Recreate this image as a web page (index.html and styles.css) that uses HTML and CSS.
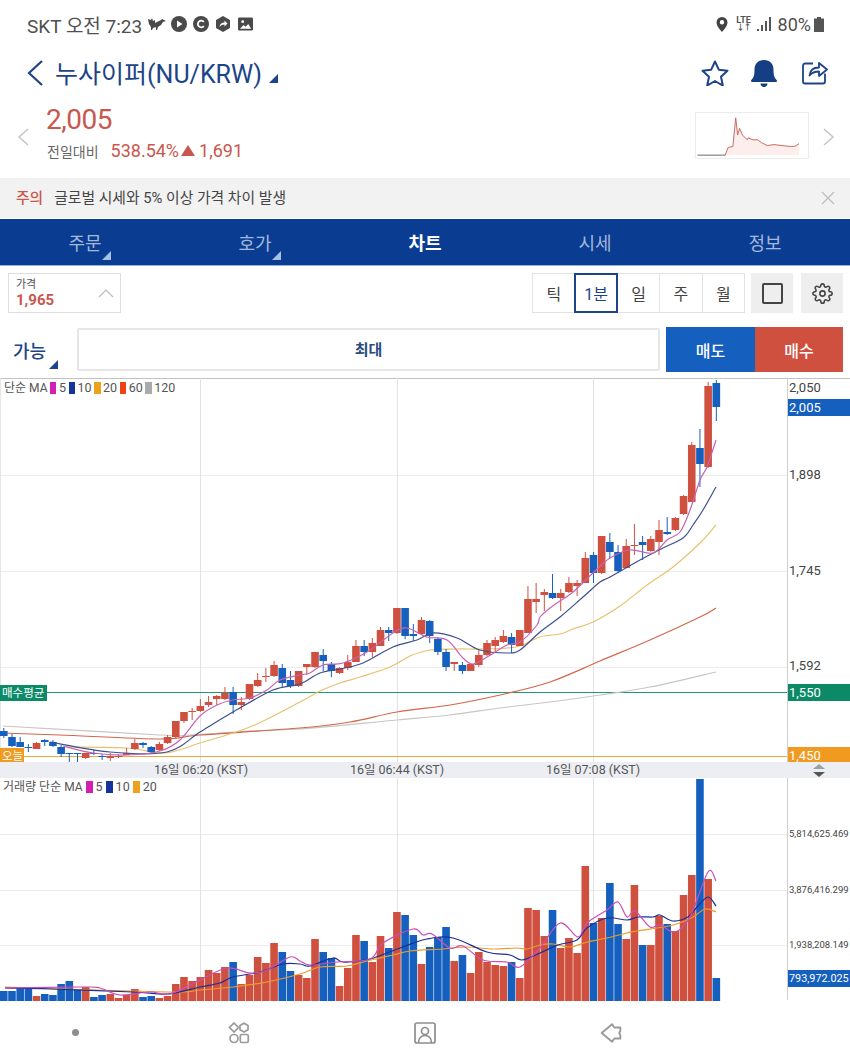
FILE: index.html
```html
<!DOCTYPE html>
<html lang="ko">
<head>
    <meta charset="UTF-8">
    <meta name="viewport" content="width=device-width, initial-scale=1.0">
    <title>누사이퍼(NU/KRW)</title>
    <link rel="stylesheet" href="styles.css">
</head>
<body>
    <!-- status bar -->
    <div class="status">
        <div class="status-left">
            <span class="status-text clock">SKT 오전 7:23</span>
            <svg class="st-bird" viewBox="0 0 18 12"><path d="M0 1l3 1 1-2 1 3 2-1v3l4-2 2-1 1-1 2 1 2 1-3 1-2 3-3 2-1 3-1 0 0-3-3 1-1 2-1 0 0-3-2-3z" fill="#4a4a4a"/></svg>
            <svg class="st-ico" viewBox="0 0 16 16"><circle cx="8" cy="8" r="8" fill="#4a4a4a"/><path d="M6 4.500l5.500 3.500-5.500 3.500z" fill="#fff"/></svg>
            <svg class="st-ico" viewBox="0 0 16 16"><circle cx="8" cy="8" r="8" fill="#4a4a4a"/><path d="M10.800 6a3.300 3.300 0 1 0 0 4" fill="none" stroke="#fff" stroke-width="1.800"/></svg>
            <svg class="st-ico" viewBox="0 0 16 16"><path d="M8 0l7 4v8l-7 4-7-4V4z" fill="#4a4a4a"/><path d="M4.500 11c.3-3 2-4.500 5-4.500V4.500l3 3-3 3V8.500c-2 0-3.500.7-5 2.500z" fill="#fff"/></svg>
            <svg class="st-pic" viewBox="0 0 16 14"><rect width="16" height="14" rx="1.500" fill="#4a4a4a"/><circle cx="5" cy="4.500" r="1.500" fill="#fff"/><path d="M2 12l4-4 2 2 3-3 3 5z" fill="#fff"/></svg>
        </div>
        <div class="status-right">
            <svg class="st-pin" viewBox="0 0 12 15"><path d="M6 0a5.500 5.500 0 0 0-5.500 5.500C.5 9.500 6 15 6 15s5.500-5.500 5.500-9.500A5.500 5.500 0 0 0 6 0zm0 7.500a2.200 2.200 0 1 1 0-4.400 2.200 2.200 0 0 1 0 4.400z" fill="#444"/></svg>
            <span class="st-lte">LTE<i>↓↑</i></span>
            <svg class="st-signal" viewBox="0 0 15 15"><path d="M0 12h2v2H0zM4 8h2v6H4zM8 4h2v10H8zM12 0h2v14h-2z" fill="#555"/></svg>
            <span class="status-text">80%</span>
            <svg class="st-batt" viewBox="0 0 10 15"><path d="M3 0h4v1.500h3V15H0V1.500h3z" fill="#555"/></svg>
        </div>
    </div>

    <!-- title -->
    <div class="title-row">
        <svg class="back" viewBox="0 0 16 26"><path d="M15 1L2 13l13 12" fill="none" stroke="#1d4488" stroke-width="2.200"/></svg>
        <h1 class="title">누사이퍼(NU/KRW)</h1>
        <span class="corner corner-title"></span>
        <div class="title-icons">
            <svg viewBox="0 0 28 26" class="ic-star"><path d="M14 1.500l3.800 8.200 8.700 1-6.500 6 1.800 8.800-7.800-4.500-7.800 4.500L8 16.700l-6.500-6 8.700-1z" fill="none" stroke="#1d4488" stroke-width="2" stroke-linejoin="round"/></svg>
            <svg viewBox="0 0 26 27" class="ic-bell"><path d="M13 0c6 0 9.500 4 9.500 9.500 0 5 .5 8 3.500 11 0 1-.5 1.500-1.500 1.500h-23C.5 22 0 21.500 0 20.500c3-3 3.500-6 3.500-11C3.500 4 7 0 13 0zM9.500 23.500h7c0 2-1.500 3.500-3.500 3.500s-3.500-1.500-3.500-3.500z" fill="#163e84"/></svg>
            <svg viewBox="0 0 26 25" class="ic-share"><path d="M11 3.500H3A2 2 0 0 0 1 5.500v16a2 2 0 0 0 2 2h18a2 2 0 0 0 2-2v-8" fill="none" stroke="#1d4488" stroke-width="1.800"/><path d="M7.500 15.500c.5-5 4-8 9.500-8V3l8 6.500-8 6.500v-4.500c-4 0-7 1-9.500 4z" fill="none" stroke="#1d4488" stroke-width="1.800" stroke-linejoin="round"/></svg>
        </div>
    </div>

    <!-- quote -->
    <div class="quote">
        <svg class="side-arrow" viewBox="0 0 12 18"><path d="M11 1L2 9l9 8" fill="none" stroke="#c4c4c4" stroke-width="1.500"/></svg>
        <div class="quote-main">
            <div class="price">2,005</div>
            <div class="diff">
                <span class="diff-label">전일대비</span>
                <span class="diff-val">538.54%</span>
                <span class="tri-up"></span>
                <span class="diff-val">1,691</span>
            </div>
        </div>
        <svg class="spark" viewBox="695 112 114 47">
            <path d="M724 156l3-8 5-1 3-30 2 18 2-7 3 7 5 5 1-2 5 2h5l4 3 6 3 7-1 17 2 5-.3 4-2.700V156z" fill="#fbeeec"/>
            <path d="M724 156l3-8 5-1 3-30 2 18 2-7 3 7 5 5 1-2 5 2h5l4 3 6 3 7-1 17 2 5-.3 4-2.700" fill="none" stroke="#c9655c" stroke-width="1"/>
            <path d="M695 156h29" fill="none" stroke="#666" stroke-width="1"/>
        </svg>
        <svg class="side-arrow" viewBox="0 0 12 18"><path d="M1 1l9 8-9 8" fill="none" stroke="#c4c4c4" stroke-width="1.500"/></svg>
    </div>

    <!-- notice -->
    <div class="notice">
        <span class="notice-tag">주의</span>
        <span class="notice-text">글로벌 시세와 5% 이상 가격 차이 발생</span>
        <svg class="notice-close" viewBox="0 0 14 14"><path d="M1 1l12 12M13 1L1 13" stroke="#bcbcbc" stroke-width="1.200"/></svg>
    </div>

    <!-- tabs -->
    <nav class="tabs">
        <div class="tab">주문<span class="corner corner-tab"></span></div>
        <div class="tab">호가<span class="corner corner-tab"></span></div>
        <div class="tab active">차트</div>
        <div class="tab">시세</div>
        <div class="tab">정보</div>
    </nav>

    <!-- chart toolbar -->
    <div class="toolbar">
        <div class="price-box">
            <div>
                <div class="price-box-label">가격</div>
                <div class="price-box-val">1,965</div>
            </div>
            <svg viewBox="0 0 16 9" class="price-box-arrow"><path d="M1 8l7-7 7 7" fill="none" stroke="#bbb" stroke-width="1.200"/></svg>
        </div>
        <div class="periods">
            <button class="period">틱</button>
            <button class="period selected">1분</button>
            <button class="period">일</button>
            <button class="period">주</button>
            <button class="period">월</button>
        </div>
        <div class="tool-btn"><span class="square"></span></div>
        <div class="tool-btn">
            <svg class="gear" viewBox="0 0 24 24" fill="none" stroke="#444" stroke-width="1.800"><circle cx="12" cy="12" r="3"/><path d="M19.4 15a1.65 1.65 0 0 0 .33 1.82l.06.06a2 2 0 0 1 0 2.83 2 2 0 0 1-2.83 0l-.06-.06a1.65 1.65 0 0 0-1.82-.33 1.65 1.65 0 0 0-1 1.51V21a2 2 0 0 1-2 2 2 2 0 0 1-2-2v-.09A1.65 1.65 0 0 0 9 19.4a1.65 1.65 0 0 0-1.82.33l-.06.06a2 2 0 0 1-2.83 0 2 2 0 0 1 0-2.83l.06-.06a1.65 1.65 0 0 0 .33-1.82 1.65 1.65 0 0 0-1.51-1H3a2 2 0 0 1-2-2 2 2 0 0 1 2-2h.09A1.65 1.65 0 0 0 4.6 9a1.65 1.65 0 0 0-.33-1.82l-.06-.06a2 2 0 0 1 0-2.83 2 2 0 0 1 2.83 0l.06.06a1.65 1.65 0 0 0 1.82.33H9a1.65 1.65 0 0 0 1-1.51V3a2 2 0 0 1 2-2 2 2 0 0 1 2 2v.09a1.65 1.65 0 0 0 1 1.51 1.65 1.65 0 0 0 1.82-.33l.06-.06a2 2 0 0 1 2.83 0 2 2 0 0 1 0 2.83l-.06.06a1.65 1.65 0 0 0-.33 1.82V9a1.65 1.65 0 0 0 1.51 1H21a2 2 0 0 1 2 2 2 2 0 0 1-2 2h-.09a1.65 1.65 0 0 0-1.51 1z"/></svg>
        </div>
    </div>

    <!-- order row -->
    <div class="order-row">
        <div class="able">가능<span class="corner corner-able"></span></div>
        <div class="max-box">최대</div>
        <button class="trade sell">매도</button>
        <button class="trade buy">매수</button>
    </div>

    <!-- chart: svg coordinates are page pixels -->
    <div class="chart">
        <svg id="plot" class="plot" viewBox="0 378 850 623"></svg>

        <div class="legend legend-price">
            <span class="legend-name">단순 MA</span>
            <i class="sw c5"></i><span>5</span>
            <i class="sw c10"></i><span>10</span>
            <i class="sw c20"></i><span>20</span>
            <i class="sw c60"></i><span>60</span>
            <i class="sw c120"></i><span>120</span>
        </div>
        <div class="legend legend-vol">
            <span class="legend-name">거래량 단순 MA</span>
            <i class="sw c5"></i><span>5</span>
            <i class="sw c10"></i><span>10</span>
            <i class="sw c20"></i><span>20</span>
        </div>

        <span class="tick t2050">2,050</span>
        <span class="tag tag-blue t2005">2,005</span>
        <span class="tick t1898">1,898</span>
        <span class="tick t1745">1,745</span>
        <span class="tick t1592">1,592</span>
        <span class="tag tag-green t1550">1,550</span>
        <span class="tag tag-orange t1450">1,450</span>
        <span class="flag flag-green">매수평균</span>
        <span class="flag flag-orange">오늘</span>

        <div class="time-strip">
            <span class="time t1">16일 06:20 (KST)</span>
            <span class="time t2">16일 06:44 (KST)</span>
            <span class="time t3">16일 07:08 (KST)</span>
            <svg class="sorter" viewBox="0 0 14 13"><path d="M7 0l6 5H1z" fill="#9aa0a8"/><path d="M7 13L1 8h12z" fill="#555"/></svg>
        </div>

        <span class="tick small v1">5,814,625.469</span>
        <span class="tick small v2">3,876,416.299</span>
        <span class="tick small v3">1,938,208.149</span>
        <span class="tag tag-blue v4">793,972.025</span>
    </div>

    <!-- android nav -->
    <div class="softkeys">
        <span class="dot"></span>
        <svg viewBox="0 0 22 22" class="key"><g fill="none" stroke="#9a9a9a" stroke-width="1.700"><path d="M6 1l4.500 4.500L6 10 1.500 5.500z"/><path d="M16 1.200l4 2.300v4.200l-4 2.300-4-2.300V3.500z"/><circle cx="6" cy="16.500" r="4"/><rect x="12.300" y="12.500" width="8" height="8" rx="1.500"/></g></svg>
        <svg viewBox="0 0 22 22" class="key"><g fill="none" stroke="#8e8e8e" stroke-width="1.700"><rect x="1" y="1" width="20" height="20" rx="2"/><circle cx="11" cy="9" r="3.500"/><path d="M4.500 21c0-5 3-7.500 6.500-7.500s6.500 2.500 6.500 7.500"/></g></svg>
        <svg viewBox="0 0 20 20" class="key"><path d="M1.500 10L11 2l2 3h5.500v3l-1 2 1 2v3H13l-2 3z" fill="none" stroke="#9a9a9a" stroke-width="1.700" stroke-linejoin="round"/></svg>
    </div>

    <script src="chart.js"></script>
</body>
</html>
```

FILE: styles.css
```css
* {
    box-sizing: border-box;
}

html, body {
    margin: 0;
    width: 850px;
    height: 1062px;
    overflow: hidden;
    background: #fff;
}

body {
    font-family: Roboto, "Noto Sans CJK KR", sans-serif;
    color: #333;
}

button {
    font-family: inherit;
    border: none;
    padding: 0;
}

/* status bar */
.status {
    display: flex;
    justify-content: space-between;
    align-items: center;
    height: 50px;
    padding: 0 26px 2px 27px;
}

.status-left, .status-right {
    display: flex;
    align-items: center;
}

.status-text {
    font-size: 18px;
    color: #505050;
    white-space: nowrap;
}

.status-text.clock {
    font-size: 19px;
}

.st-bird { width: 18px; height: 12px; margin: 0 5px 0 6px; }
.st-ico { width: 16px; height: 16px; margin-right: 6px; }
.st-pic { width: 15px; height: 14px; margin-left: 1px; }
.st-pin { width: 12px; height: 15px; margin-right: 9px; }
.st-signal { width: 15px; height: 15px; margin: 0 6px 0 6px; }
.st-batt { width: 10px; height: 15px; margin-left: 3px; }

.st-lte {
    display: flex;
    flex-direction: column;
    align-items: center;
    font-size: 9px;
    font-weight: 700;
    line-height: 8px;
    color: #555;
    width: 14px;
}

.st-lte i {
    font-style: normal;
    font-size: 8px;
    letter-spacing: -1px;
}

/* title */
.title-row {
    display: flex;
    align-items: center;
    height: 46px;
    padding-left: 27px;
}

.back {
    width: 16px;
    height: 26px;
    margin-right: 12px;
}

.title {
    margin: 0 0 2px;
    font-size: 25px;
    font-weight: 400;
    color: #1d4488;
}

.corner {
    display: block;
    width: 0;
    height: 0;
    border-style: solid;
    border-width: 0 0 9px 9px;
    border-color: transparent;
}

.corner-title {
    border-bottom-color: #1d4488;
    margin: 11px 0 0 7px;
}

.title-icons {
    display: flex;
    align-items: center;
    margin-left: auto;
    padding-right: 22px;
}

.ic-star { width: 28px; height: 26px; margin-right: 22px; }
.ic-bell { width: 26px; height: 27px; margin-right: 25px; }
.ic-share { width: 26px; height: 25px; margin-bottom: 2px; }

/* quote */
.quote {
    display: flex;
    align-items: center;
    height: 82px;
    padding: 0 15px 0 17px;
}

.side-arrow {
    width: 12px;
    height: 18px;
}

.quote-main {
    align-self: flex-start;
    margin: 7px 0 0 17px;
}

.price {
    font-size: 28px;
    line-height: 34px;
    color: #c9574d;
    letter-spacing: -0.5px;
}

.diff {
    display: flex;
    align-items: center;
    margin-top: 3px;
}

.diff-label {
    font-size: 14px;
    color: #666;
    margin: 0 12px 0 1px;
}

.diff-val {
    font-size: 18px;
    color: #c9574d;
}

.tri-up {
    width: 0;
    height: 0;
    margin: 0 4px 0 2px;
    border-style: solid;
    border-width: 0 7.500px 11px 7.500px;
    border-color: transparent transparent #c9574d transparent;
}

.spark {
    width: 114px;
    height: 47px;
    margin: -3px 14px 0 auto;
    border: 1px solid #ececec;
}

/* notice */
.notice {
    display: flex;
    align-items: center;
    height: 40px;
    padding: 0 15px 3px 16px;
    background: #f2f2f2;
}

.notice-tag {
    font-size: 14.800px;
    font-weight: 500;
    color: #c9574d;
    margin-right: 11px;
}

.notice-text {
    font-size: 14.800px;
    color: #444;
}

.notice-close {
    width: 14px;
    height: 14px;
    margin: 3px 0 0 auto;
}

/* tabs */
.tabs {
    display: grid;
    grid-template-columns: repeat(5, 1fr);
    height: 47px;
    margin-top: 1px;
    background: #0a3c91;
    border-bottom: 1px solid #8fb0de;
}

.tab {
    display: flex;
    align-items: center;
    justify-content: center;
    font-size: 18px;
    color: #a3b9dc;
    position: relative;
}

.tab.active {
    color: #fff;
    font-weight: 700;
}

.corner-tab {
    position: absolute;
    left: 102px;
    bottom: 5px;
    border-bottom-color: #a9c0e3;
}

/* toolbar */
.toolbar {
    display: flex;
    align-items: flex-start;
    height: 61px;
    padding: 7px 7px 0 8px;
}

.price-box {
    display: flex;
    align-items: center;
    justify-content: space-between;
    width: 113px;
    height: 40px;
    padding: 0 6px 0 7px;
    border: 1px solid #dedede;
}

.price-box-label {
    font-size: 11px;
    line-height: 14px;
    color: #555;
}

.price-box-val {
    font-size: 15px;
    line-height: 16px;
    font-weight: 700;
    color: #c9574d;
}

.price-box-arrow {
    width: 16px;
    height: 9px;
}

.periods {
    display: flex;
    margin-left: auto;
    margin-right: 6px;
}

.period {
    width: 43.400px;
    height: 40px;
    margin-left: -1px;
    background: #fff;
    border: 1px solid #e2e2e2;
    font-size: 16px;
    color: #444;
}

.period.selected {
    position: relative;
    border: 2px solid #1d4488;
    color: #1d4488;
}

.tool-btn {
    display: flex;
    align-items: center;
    justify-content: center;
    width: 42px;
    height: 40px;
    background: #eee;
}

.tool-btn + .tool-btn {
    margin-left: 8px;
}

.square {
    width: 21px;
    height: 21px;
    border: 2px solid #444;
    border-radius: 2px;
}

.gear {
    width: 21px;
    height: 21px;
}

/* order row */
.order-row {
    display: flex;
    align-items: stretch;
    height: 45px;
    padding-right: 7px;
}

.able {
    position: relative;
    width: 77px;
    padding: 10px 0 0 13px;
    font-size: 18px;
    font-weight: 500;
    color: #1d4488;
}

.corner-able {
    position: absolute;
    left: 49px;
    bottom: 3px;
    border-bottom-color: #1d4488;
}

.max-box {
    display: flex;
    align-items: center;
    justify-content: center;
    width: 583px;
    margin: 1px 6px 1px 0;
    padding-bottom: 2px;
    border: 2px solid #e6e6e6;
    border-radius: 2px;
    font-size: 15px;
    font-weight: 700;
    color: #2a4a80;
}

.trade {
    width: 89px;
    font-size: 16px;
    font-weight: 500;
    color: #fff;
}

.sell { background: #1560bf; }
.buy { background: #d0503f; width: 88px; }

/* chart */
.chart {
    position: relative;
    height: 623px;
    margin-top: 6px;
}

.plot {
    position: absolute;
    left: 0;
    top: 0;
    width: 850px;
    height: 623px;
}

.legend {
    position: absolute;
    display: flex;
    align-items: center;
    font-size: 12.500px;
    line-height: 16px;
    color: #555;
    white-space: nowrap;
}

.legend-price { left: 4px; top: 2px; }
.legend-vol { left: 3px; top: 401px; }

.legend-name {
    font-size: 12px;
}

.sw {
    display: inline-block;
    width: 6.500px;
    height: 12px;
    margin: 0 2.500px;
}

.legend-vol .sw {
    margin: 0 3px 0 3.500px;
}

.c5 { background: #d21fb4; }
.c10 { background: #14349c; }
.c20 { background: #eea11d; }
.c60 { background: #ee4415; }
.c120 { background: #aaa; }

.tick, .tag {
    position: absolute;
    left: 788px;
    font-size: 13px;
    line-height: 17px;
    color: #444;
    padding-left: 1px;
    white-space: nowrap;
}

.tick.small {
    font-size: 9.500px;
}

.tag {
    width: 62px;
    color: #fff;
}

.tag-blue { background: #1560bf; }
.tag-green { background: #0c8a68; }
.tag-orange { background: #f09a1f; }

.t2050 { top: 1px; }
.t2005 { top: 21px; }
.t1898 { top: 88px; }
.t1745 { top: 184px; }
.t1592 { top: 279px; }
.t1550 { top: 306px; }
.t1450 { top: 369px; }
.v1 { top: 447px; }
.v2 { top: 503px; }
.v3 { top: 558px; }
.v4 { top: 592px; font-size: 10.800px; }

.flag {
    position: absolute;
    left: 0;
    font-size: 11.500px;
    line-height: 16px;
    padding: 0 2px;
    color: #fff;
    white-space: nowrap;
}

.flag-green { top: 307px; width: 47px; background: #0c8a68; }
.flag-orange { top: 370px; width: 24px; background: #f09a1f; }

.time-strip {
    position: absolute;
    left: 0;
    top: 384px;
    width: 850px;
    height: 16px;
    background: #eceef3;
}

.time {
    position: absolute;
    top: 0;
    transform: translateX(-50%);
    font-size: 12.500px;
    line-height: 16px;
    color: #555;
    white-space: nowrap;
}

.t1 { left: 201px; }
.t2 { left: 397px; }
.t3 { left: 593px; }

.sorter {
    position: absolute;
    left: 812px;
    top: 2px;
    width: 14px;
    height: 13px;
}

/* soft keys */
.softkeys {
    display: grid;
    grid-template-columns: 146px repeat(3, 186px);
    justify-items: center;
    align-items: center;
    height: 61px;
    padding-top: 2px;
}

.key {
    width: 22px;
    height: 22px;
}

.dot {
    width: 7px;
    height: 7px;
    margin-left: 4px;
    border-radius: 50%;
    background: #8e8e8e;
}
```

FILE: chart.js
```js
const NS = 'http://www.w3.org/2000/svg';
const plot = document.getElementById('plot');

const RED = '#d0503f';
const BLUE = '#1560bf';
const STEP = 8.19;

// r/b, body top, body bottom, high, low (page pixels)
const candles = [
    ['b',731,736,728,738],['b',737,746,734,747],['b',742,747,737,747],['b',747,748,744,752],
    ['r',743,749,742,749],['b',740,742,739,746],['b',742,746,740,747],['b',747,754,745,757],
    ['b',753,754,753,762],['b',753,754,753,762],['r',753,758,753,759],['b',753,754,750,755],
    ['b',756,757,754,760],['r',756,758,753,761],['r',756,757,754,758],['r',753,755,748,755],
    ['r',743,749,739,750],['b',743,745,742,748],['b',747,752,746,753],['r',744,750,742,751],
    ['r',737,743,735,744],['r',721,737,721,738],['r',712,721,712,723],['r',711,712,708,720],
    ['r',706,711,699,712],['r',702,705,696,707],['r',696,699,695,705],['r',693,699,687,700],
    ['b',692,705,687,714],['r',702,705,697,710],['r',684,699,684,700],['r',680,686,673,687],
    ['r',676,677,668,682],['r',665,676,661,677],['b',668,683,664,688],['b',680,686,671,688],
    ['r',671,686,671,687],['r',664,667,664,675],['r',652,667,652,668],['b',655,661,649,671],
    ['b',664,671,662,677],['r',668,673,667,674],['r',662,668,655,670],['r',646,662,640,662],
    ['b',646,652,640,656],['r',643,652,638,657],['r',630,646,627,646],['b',630,633,627,641],
    ['r',608,633,608,634],['b',608,636,608,639],['b',634,636,624,641],['r',620,634,617,635],
    ['b',621,636,620,643],['b',639,652,637,655],['b',652,667,649,671],['r',662,664,662,671],
    ['b',665,671,662,674],['r',664,671,664,671],['r',655,665,650,667],['r',643,655,640,656],
    ['r',640,646,637,653],['r',636,642,630,643],['b',637,645,633,653],['r',630,646,630,646],
    ['r',599,633,586,633],['r',599,602,583,613],['r',592,595,589,611],['b',593,598,574,599],
    ['r',593,598,589,611],['r',583,592,577,593],['r',583,586,580,596],['r',558,583,552,583],
    ['b',555,573,552,583],['r',536,573,536,574],['b',542,552,533,558],['b',552,571,545,573],
    ['r',546,568,539,568],['r',545,546,524,555],['b',542,545,536,560],['r',539,551,536,552],
    ['r',530,542,520,555],['b',532,534,517,535],['r',518,530,517,531],['r',496,514,495,515],
    ['r',445,502,442,502],['b',448,464,429,487],['r',386,467,382,468],['b',383,407,380,421]
];

// r/b, top of bar; baseline is 1001
const volumes = [
    ['b',991],['b',991],['b',987],['b',987],['r',996],['b',994],['b',995],['b',984],['b',981],['b',989],
    ['r',987],['b',997],['b',995],['r',994],['r',998],['r',995],['r',989],['b',997],['b',996],['r',998],
    ['r',996],['r',984],['r',977],['r',981],['r',977],['r',970],['r',973],['r',967],['b',962],['r',984],
    ['r',975],['r',957],['r',963],['r',943],['b',952],['b',971],['r',975],['r',978],['r',939],['b',952],
    ['b',958],['r',986],['r',968],['r',935],['b',941],['r',962],['r',936],['b',948],['r',912],['b',915],
    ['b',935],['r',964],['b',947],['b',937],['b',927],['r',961],['b',955],['r',973],['r',952],['r',962],
    ['r',965],['r',966],['b',962],['r',978],['r',908],['r',910],['r',936],['b',910],['r',948],['r',938],
    ['r',953],['r',866],['b',923],['r',918],['b',883],['b',924],['r',939],['r',885],['b',945],['r',945],
    ['r',916],['b',924],['r',931],['r',895],['r',875],['b',779],['r',879],['b',978]
];

const priceLines = [
    { color: '#c9c5c2', points: '3,726 160,735 190,735 250,731 300,729 397,720 450,715 500,708 550,702 600,695 650,687 716,672' },
    { color: '#d2674b', points: '0,733 60,735 160,739 200,735 300,728 350,722 397,712 450,705 500,695 550,682 600,661 650,640 700,617 716,608' },
    { color: '#e7c26e', points: '67,747 127,748 165,753 200,743 250,727 300,702 320,691 340,683 360,677 390,667 410,656 430,650 457,649 480,649 516,647 540,637 560,634 573,629 593,622 620,606 647,585 673,567 700,543 716,525' },
    { color: '#3c4f8e', points: '50,742 110,752 167,752 200,732 233,712 273,690 300,684 320,673 340,669 363,663 393,647 417,640 433,633 457,638 480,650 507,653 520,650 540,632 560,617 583,597 600,582 610,577 640,560 663,548 683,538 693,525 703,510 716,487' },
    { color: '#c862b4', points: '63,746 93,753 127,755 160,751 180,740 200,716 217,705 233,700 250,698 267,690 280,680 300,675 310,673 323,665 343,663 367,652 393,633 407,628 427,637 447,640 463,658 473,664 487,657 507,645 520,642 537,625 540,617 550,608 557,603 573,592 593,573 610,558 630,550 653,553 667,540 680,532 690,510 700,480 707,467 716,440' }
];

const volumeLines = [
    { color: '#eb9d2b', points: '5,987 167,992 200,990 233,987 267,982 300,974 320,967 347,966 367,961 393,955 410,951 443,949 467,947 493,949 517,948 527,949 540,945 553,944 570,947 587,942 607,938 627,933 637,931 673,925 693,917 705,909 716,912' },
    { color: '#1d2f96', points: '5,988 50,989 133,992 167,994 200,987 220,983 233,977 260,972 283,964 300,964 310,966 333,958 343,962 370,959 400,948 427,939 453,938 487,952 510,955 522,960 540,953 558,945 577,940 587,928 607,918 627,920 638,917 653,917 660,915 673,921 688,917 697,907 708,897 716,906' },
    { color: '#cc4db8', points: '5,988 83,987 100,988 120,995 150,992 170,994 200,980 227,968 250,973 267,970 290,957 300,961 310,965 337,962 370,959 383,943 413,929 423,935 432,934 450,948 463,946 483,960 507,962 520,967 540,948 560,923 578,937 587,923 607,910 618,902 627,917 635,911 650,927 660,925 675,932 690,917 708,872 716,881' }
];

function add(tag, attrs) {
    const el = document.createElementNS(NS, tag);
    for (const key in attrs) el.setAttribute(key, attrs[key]);
    plot.appendChild(el);
}

function line(x1, y1, x2, y2, stroke, width) {
    add('line', { x1, y1, x2, y2, stroke, 'stroke-width': width || 1 });
}

// Catmull-Rom through the points, so the averages don't look like polylines
function smoothPath(points) {
    const p = points.split(' ').map(s => s.split(',').map(Number));
    let d = `M${p[0][0]} ${p[0][1]}`;
    for (let i = 0; i < p.length - 1; i++) {
        const a = p[i - 1] || p[i];
        const b = p[i];
        const c = p[i + 1];
        const e = p[i + 2] || c;
        const c1x = (b[0] + (c[0] - a[0]) / 6).toFixed(1);
        const c1y = (b[1] + (c[1] - a[1]) / 6).toFixed(1);
        const c2x = (c[0] - (e[0] - b[0]) / 6).toFixed(1);
        const c2y = (c[1] - (e[1] - b[1]) / 6).toFixed(1);
        d += `C${c1x} ${c1y} ${c2x} ${c2y} ${c[0]} ${c[1]}`;
    }
    return d;
}

function drawLines(lines) {
    lines.forEach(l => add('path', {
        d: smoothPath(l.points),
        fill: 'none',
        stroke: l.color,
        'stroke-width': 1.2
    }));
}

// Frame and grid
line(0, 378.5, 850, 378.5, '#c2c2c2');
[475.5, 571.5, 667.5, 834.5, 890.5, 945.5].forEach(y => line(0, y, 787, y, '#ececec'));
[200.5, 397.5, 593.5].forEach(x => line(x, 378, x, 1001, '#e2e2e2'));
line(0.5, 378, 0.5, 762, '#e6e6e6');
line(787.5, 378, 787.5, 1000, '#cfcfcf');

// Price marker lines
line(0, 692.5, 787, 692.5, '#1c9a76');
line(0, 756.5, 787, 756.5, '#efa63c');

drawLines(priceLines.slice(0, 3));

candles.forEach((c, i) => {
    const color = c[0] === 'r' ? RED : BLUE;
    const left = i * STEP;
    line(left + 3.8, c[3], left + 3.8, c[4], color);
    add('rect', { x: left, y: c[1], width: 7.6, height: c[2] - c[1], fill: color });
});

drawLines(priceLines.slice(3));

volumes.forEach((v, i) => {
    add('rect', {
        x: i * STEP,
        y: v[1],
        width: 7.6,
        height: 1001 - v[1],
        fill: v[0] === 'r' ? RED : BLUE
    });
});

drawLines(volumeLines);
```
